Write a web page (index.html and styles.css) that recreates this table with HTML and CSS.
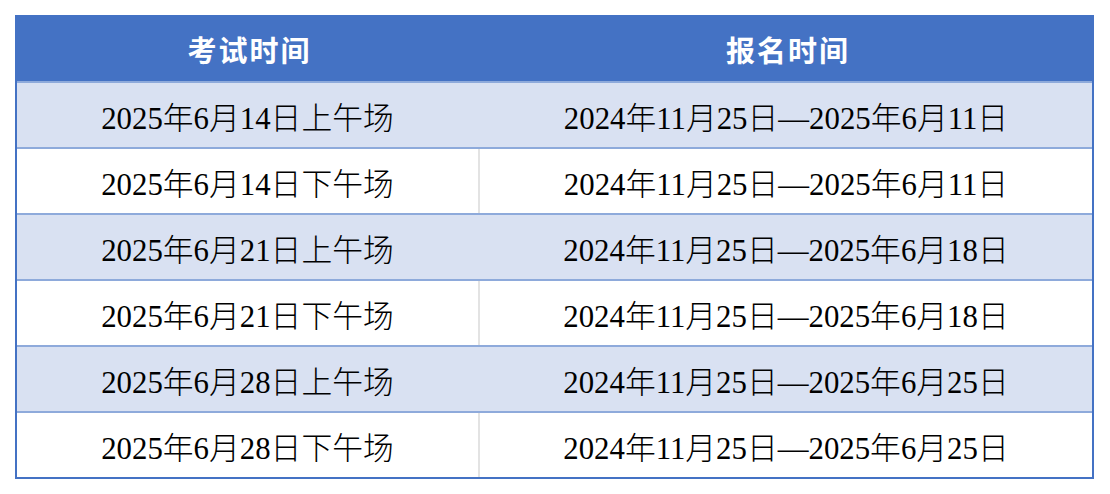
FILE: index.html
```html
<!DOCTYPE html>
<html lang="zh-CN">
<head>
<meta charset="utf-8">
<title>考试时间</title>
<link rel="stylesheet" href="styles.css">
</head>
<body>
<div class="table">
  <div class="row head">
    <div class="cell left">考试时间</div>
    <div class="cell right">报名时间</div>
  </div>
  <div class="row stripe">
    <div class="cell left">2025年6月14日上午场</div>
    <div class="cell right">2024年11月25日—2025年6月11日</div>
  </div>
  <div class="row plain">
    <div class="cell left">2025年6月14日下午场</div>
    <div class="cell right">2024年11月25日—2025年6月11日</div>
  </div>
  <div class="row stripe">
    <div class="cell left">2025年6月21日上午场</div>
    <div class="cell right">2024年11月25日—2025年6月18日</div>
  </div>
  <div class="row plain">
    <div class="cell left">2025年6月21日下午场</div>
    <div class="cell right">2024年11月25日—2025年6月18日</div>
  </div>
  <div class="row stripe">
    <div class="cell left">2025年6月28日上午场</div>
    <div class="cell right">2024年11月25日—2025年6月25日</div>
  </div>
  <div class="row plain">
    <div class="cell left">2025年6月28日下午场</div>
    <div class="cell right">2024年11月25日—2025年6月25日</div>
  </div>
</div>
</body>
</html>
```
FILE: styles.css
```css
html, body {
  margin: 0;
  padding: 0;
  background: #ffffff;
}

.table {
  box-sizing: border-box;
  width: 1079px;
  margin: 15px 0 0 15px;
  border: 2px solid #4472c4;
  font-family: "Liberation Serif", "Noto Sans CJK SC", serif;
  color: #000000;
}

.row {
  display: flex;
  height: 64px;
}

.row.stripe,
.row.plain {
  border-top: 2px solid #8eaadb;
}

.row.stripe {
  background: #d9e1f2;
}

.row.plain {
  background: #ffffff;
}

.cell {
  display: flex;
  align-items: center;
  justify-content: center;
  font-size: 30.8px;
  font-weight: 300;
  white-space: nowrap;
}

.cell.left {
  width: 461px;
  border-right: 2px solid transparent;
}

.cell.right {
  flex: 1;
}

.row.plain .cell.left {
  border-right-color: #e3e3e3;
}

.row.head {
  background: #4472c4;
}

.row.head .cell {
  color: #ffffff;
  font-family: "Noto Sans CJK SC", sans-serif;
  font-weight: 700;
  font-size: 29px;
  letter-spacing: 2px;
  padding-left: 2px;
}
```
